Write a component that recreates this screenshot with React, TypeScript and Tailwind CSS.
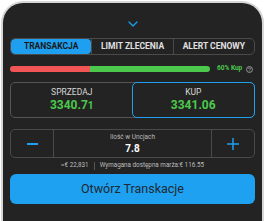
import React from "react";

const tabs = ["TRANSAKCJA", "LIMIT ZLECENIA", "ALERT CENOWY"];

export default function App() {
  return (
    <div className="w-[265px] h-[221px] bg-white overflow-hidden font-['Roboto',sans-serif]">
      <div className="mx-[1px] mt-[1px] h-[224px] rounded-t-[22px] border-[2px] border-b-0 border-[#d6d6d6] bg-[#232323] px-[7px]">
        <div className="flex justify-center pt-[18px] h-[32px]">
          <svg width="10" height="6" viewBox="0 0 10 6" fill="none">
            <path d="M1 1l4 4 4-4" stroke="#1e9ff0" strokeWidth="1.3" strokeLinecap="round" strokeLinejoin="round" />
          </svg>
        </div>
        <div className="mt-[3px] flex h-[17px] rounded-[5px] border border-[#4a4a4a] overflow-hidden">
          {tabs.map((t, i) => (
            <div
              key={t}
              className={
                i === 0
                  ? "flex-1 flex items-center justify-center bg-[#1e9ff0] text-[#1a1a1a] text-[8.5px] font-bold rounded-[4px]"
                  : "flex-1 flex items-center justify-center text-[#e0e0e0] text-[8.5px] font-bold border-l border-[#4a4a4a]"
              }
            >
              {t}
            </div>
          ))}
        </div>
        <div className="mt-[10px] flex items-center h-[8px]">
          <div className="flex h-[6px] w-[200px] rounded-full overflow-hidden">
            <div className="w-[80px] bg-[#f25555]" />
            <div className="flex-1 bg-[#4cc94c]" />
          </div>
          <span className="ml-[7px] text-[6.5px] font-bold text-[#4cc94c]">60% Kup</span>
          <svg className="ml-[4px]" width="7" height="7" viewBox="0 0 10 10">
            <circle cx="5" cy="5" r="4.2" fill="none" stroke="#aaa" strokeWidth="1.2" />
            <path d="M3.6 4a1.4 1.4 0 1 1 1.9 1.3c-.4.2-.5.4-.5.8" stroke="#aaa" strokeWidth="1.1" fill="none" />
            <circle cx="5" cy="7.3" r=".6" fill="#aaa" />
          </svg>
        </div>
        <div className="mt-[9px] flex h-[36px] rounded-[5px] border border-[#555]">
          <div className="flex-1 flex flex-col items-center justify-center">
            <span className="text-[8.5px] text-[#d8d8d8] leading-[10px]">SPRZEDAJ</span>
            <span className="text-[12px] font-bold text-[#4cc94c] leading-[16px]">
              3340.7<span className="text-[10px]">1</span>
            </span>
          </div>
          <div className="flex-1 flex flex-col items-center justify-center rounded-[5px] border-[1.5px] border-[#1e9ff0] -m-[1px]">
            <span className="text-[8.5px] text-[#d8d8d8] leading-[10px]">KUP</span>
            <span className="text-[12px] font-bold text-[#4cc94c] leading-[16px]">3341.06</span>
          </div>
        </div>
        <div className="mt-[11px] flex h-[29px] rounded-[5px] border border-[#4a4a4a]">
          <div className="w-[43px] flex items-center justify-center border-r border-[#4a4a4a]">
            <div className="w-[11px] h-[2px] bg-[#1e9ff0]" />
          </div>
          <div className="flex-1 flex flex-col items-center justify-center">
            <span className="text-[6.5px] text-[#bbb] leading-[9px]">Ilość w Uncjach</span>
            <span className="text-[10px] font-bold text-white leading-[13px]">7.8</span>
          </div>
          <div className="w-[43px] flex items-center justify-center border-l border-[#4a4a4a]">
            <svg width="12" height="12" viewBox="0 0 12 12">
              <path d="M6 0v12M0 6h12" stroke="#1e9ff0" strokeWidth="1.5" />
            </svg>
          </div>
        </div>
        <div className="mt-[3px] flex items-center justify-center h-[10px] text-[6.3px] text-[#bdbdbd]">
          <span>≈€ 22,831</span>
          <span className="mx-[5px] h-[8px] w-px bg-[#555]" />
          <span>Wymagana dostępna marża:€ 116.55</span>
        </div>
        <button className="mt-[3px] w-full h-[30px] rounded-[6px] bg-[#1ea1f0] text-[12.5px] text-[#1f2a33] flex items-center justify-center">
          Otwórz Transkacje
        </button>
      </div>
    </div>
  );
}
